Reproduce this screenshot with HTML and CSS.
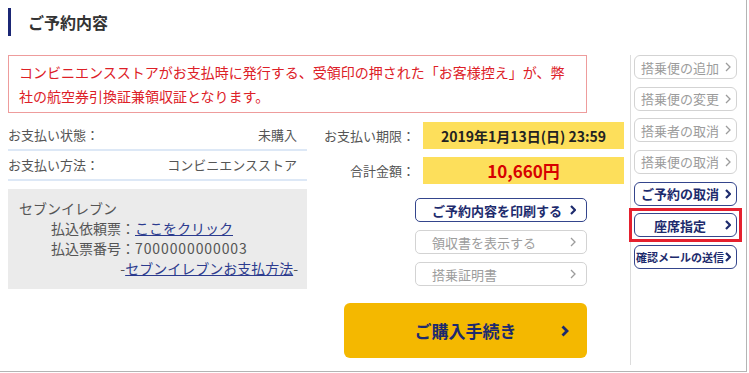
FILE: index.html
```html
<!DOCTYPE html>
<html lang="ja">
<head>
<meta charset="utf-8">
<title>ご予約内容</title>
<link rel="stylesheet" href="styles.css">
</head>
<body>
<div class="page">
  <header class="head">
    <span class="head-bar"></span>
    <h1 class="head-title">ご予約内容</h1>
  </header>
  <div class="body">
    <main class="main">
      <p class="notice">コンビニエンスストアがお支払時に発行する、受領印の押された「お客様控え」が、弊社の航空券引換証兼領収証となります。</p>
      <div class="info">
        <div class="info-left">
          <dl class="rows">
            <div class="row"><dt>お支払い状態：</dt><dd>未購入</dd></div>
            <div class="row"><dt>お支払い方法：</dt><dd>コンビニエンスストア</dd></div>
          </dl>
          <div class="store">
            <p class="store-name">セブンイレブン</p>
            <p class="store-line">払込依頼票：<a class="link" href="#">ここをクリック</a></p>
            <p class="store-line">払込票番号：<span class="num">7000000000003</span></p>
            <p class="store-how">-<a class="link" href="#">セブンイレブンお支払方法</a>-</p>
          </div>
        </div>
        <div class="info-mid">
          <div class="kv"><span class="kv-label">お支払い期限：</span><span class="kv-val kv-date">2019年1月13日(日) 23:59</span></div>
          <div class="kv"><span class="kv-label">合計金額：</span><span class="kv-val kv-price">10,660円</span></div>
          <div class="actions">
            <a class="btn btn-on" href="#"><span>ご予約内容を印刷する</span><svg class="chev" viewBox="0 0 6 10" width="6" height="10"><polyline points="1,1 5,5 1,9"/></svg></a>
            <a class="btn btn-off" href="#"><span>領収書を表示する</span><svg class="chev" viewBox="0 0 6 10" width="6" height="10"><polyline points="1,1 5,5 1,9"/></svg></a>
            <a class="btn btn-off" href="#"><span>搭乗証明書</span><svg class="chev" viewBox="0 0 6 10" width="6" height="10"><polyline points="1,1 5,5 1,9"/></svg></a>
          </div>
          <a class="buy" href="#"><span class="buy-text">ご購入手続き</span><svg class="buy-chev" viewBox="0 0 8 12" width="8" height="12"><polyline points="1.5,1.5 6,6 1.5,10.5"/></svg></a>
        </div>
      </div>
    </main>
    <aside class="side">
      <a class="sbtn sbtn-off" href="#"><span class="sbtn-text">搭乗便の追加</span><svg class="chev" viewBox="0 0 6 10" width="6" height="10"><polyline points="1,1 5,5 1,9"/></svg></a>
      <a class="sbtn sbtn-off" href="#"><span class="sbtn-text">搭乗便の変更</span><svg class="chev" viewBox="0 0 6 10" width="6" height="10"><polyline points="1,1 5,5 1,9"/></svg></a>
      <a class="sbtn sbtn-off" href="#"><span class="sbtn-text">搭乗者の取消</span><svg class="chev" viewBox="0 0 6 10" width="6" height="10"><polyline points="1,1 5,5 1,9"/></svg></a>
      <a class="sbtn sbtn-off" href="#"><span class="sbtn-text">搭乗便の取消</span><svg class="chev" viewBox="0 0 6 10" width="6" height="10"><polyline points="1,1 5,5 1,9"/></svg></a>
      <a class="sbtn sbtn-on" href="#"><span class="sbtn-text">ご予約の取消</span><svg class="chev" viewBox="0 0 6 10" width="6" height="10"><polyline points="1,1 5,5 1,9"/></svg></a>
      <div class="mark">
        <a class="sbtn sbtn-on" href="#"><span class="sbtn-text">座席指定</span><svg class="chev" viewBox="0 0 6 10" width="6" height="10"><polyline points="1,1 5,5 1,9"/></svg></a>
      </div>
      <a class="sbtn sbtn-on sbtn-small" href="#"><span class="sbtn-text">確認メールの送信</span><svg class="chev" viewBox="0 0 6 10" width="6" height="10"><polyline points="1,1 5,5 1,9"/></svg></a>
    </aside>
  </div>
</div>
</body>
</html>
```
FILE: styles.css
```css
* { box-sizing: border-box; }
html, body { margin: 0; padding: 0; background: #fff; }
body {
  font-family: "Noto Sans CJK JP", "Noto Sans", sans-serif;
  color: #555;
  font-size: 13px;
}
p, h1, dl, dd, dt { margin: 0; }

.page {
  width: 747px;
  height: 372px;
  border-right: 1px solid #b4b4b4;
  border-bottom: 1px solid #b4b4b4;
}

.head {
  display: flex;
  align-items: center;
  padding: 8px 0 0 8px;
  height: 36px;
  margin-bottom: 19px;
}
.head-bar {
  width: 3px;
  height: 28px;
  background: #1b2775;
}
.head-title {
  margin-left: 17px;
  font-size: 16px;
  font-weight: 700;
  color: #333;
  line-height: 26px;
}

.body {
  display: flex;
  height: 310px;
}
.main {
  width: 625px;
  padding-left: 8px;
}

.notice {
  width: 579px;
  border: 1px solid #ee9c9c;
  padding: 4px 15px 4px 10px;
  font-size: 14px;
  line-height: 24px;
  color: #dd2027;
}

.info {
  display: flex;
  gap: 8px;
  margin-top: 8px;
}
.info-left { width: 299px; }

.row {
  display: flex;
  justify-content: space-between;
  padding: 4px 10px 4px 0;
  line-height: 20px;
  border-bottom: 2px solid #dde8f6;
}

.store {
  margin-top: 8px;
  height: 100px;
  background: #ebebeb;
  padding: 9px 9px 11px 11px;
  font-size: 14px;
  line-height: 20px;
  color: #555;
}
.store-line { padding-left: 32px; }
.store-how { text-align: right; }
.num { letter-spacing: 0.9px; }
.link { color: #2c3b8e; text-decoration: underline; }

.info-mid {
  width: 310px;
  padding-top: 1px;
  display: flex;
  flex-direction: column;
}
.kv {
  display: flex;
  align-items: center;
  gap: 8px;
  height: 27px;
  margin-bottom: 8px;
}
.kv-label {
  width: 100px;
  text-align: right;
  color: #555;
}
.kv-val {
  width: 201px;
  height: 27px;
  background: #fddf5b;
  display: flex;
  align-items: center;
  justify-content: center;
}
.kv-date { font-weight: 700; color: #222; font-size: 14px; }
.kv-price { font-weight: 700; color: #d70000; font-size: 17px; }

.actions {
  margin-top: 6px;
  padding-left: 100px;
  display: flex;
  flex-direction: column;
  gap: 8px;
}
.btn {
  display: flex;
  align-items: center;
  justify-content: space-between;
  width: 172px;
  height: 24px;
  padding: 0 10px 0 16px;
  border: 1px solid #d3d3d3;
  border-radius: 5px;
  text-decoration: none;
  font-size: 13px;
}
.btn-on {
  border-color: #34458c;
  color: #1d2b6d;
  font-weight: 700;
}
.btn-off { color: #9c9c9c; }

.chev {
  fill: none;
  stroke: currentColor;
  stroke-width: 1.3;
  flex: none;
}
.btn-on .chev, .sbtn-on .chev { stroke-width: 2.2; }

.buy {
  display: grid;
  grid-template-columns: 1fr auto 1fr;
  align-items: center;
  margin: 17px 0 0 29px;
  width: 243px;
  height: 55px;
  background: #f4b800;
  border-radius: 6px;
  text-decoration: none;
  color: #1d2a6e;
}
.buy-text {
  grid-column: 2;
  font-size: 17px;
  font-weight: 700;
}
.buy-chev {
  grid-column: 3;
  justify-self: end;
  margin-right: 18px;
  fill: none;
  stroke: currentColor;
  stroke-width: 2.8;
}

.side {
  margin-left: 5px;
  border-left: 1px solid #dcdcdc;
  padding-left: 3px;
  display: flex;
  flex-direction: column;
  gap: 7.67px;
}
.sbtn {
  display: flex;
  align-items: center;
  width: 103px;
  height: 24px;
  padding-right: 5px;
  border: 1px solid #d3d3d3;
  border-radius: 6px;
  text-decoration: none;
  font-size: 13px;
  color: #9c9c9c;
}
.sbtn-text {
  flex: 1;
  text-align: center;
  white-space: nowrap;
}
.sbtn-on {
  border-color: #34458c;
  color: #1d2b6d;
  font-weight: 700;
}
.sbtn-small { font-size: 11px; }
.mark {
  margin: -5px;
  width: 113px;
  padding: 2px;
  border: 3px solid #e5202e;
}
```
